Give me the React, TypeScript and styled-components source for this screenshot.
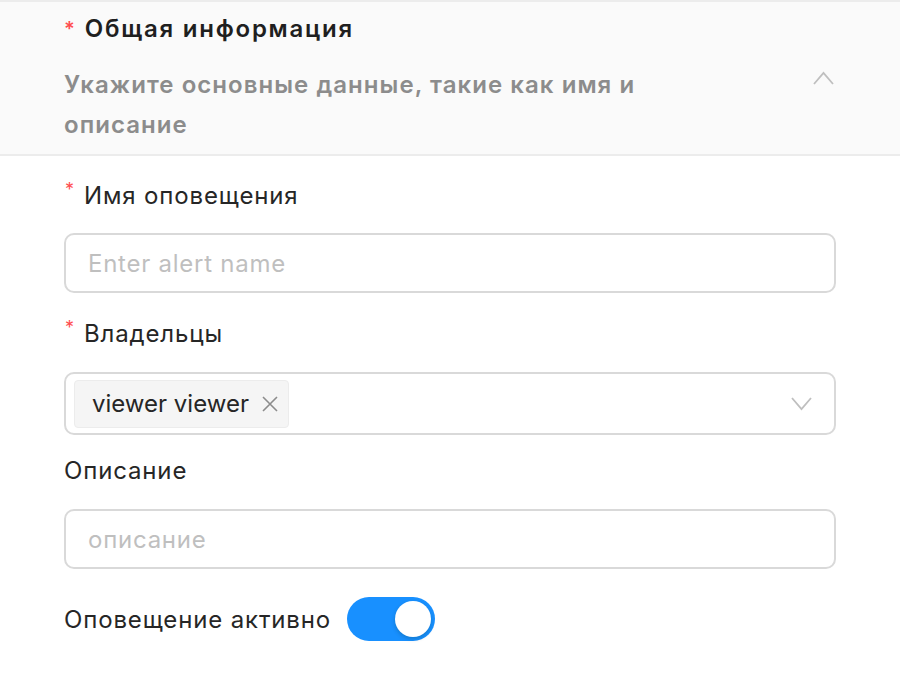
import React, { useState } from "react";
import styled, { createGlobalStyle } from "styled-components";

const GlobalStyle = createGlobalStyle`
  html, body { margin: 0; padding: 0; background: #ffffff; }
  body { font-family: Inter, "Noto Sans", "Liberation Sans", sans-serif; -webkit-font-smoothing: antialiased; }
  * { box-sizing: border-box; }
`;

const Page = styled.div`
  width: 900px;
  height: 680px;
  background: #ffffff;
  overflow: hidden;
`;

const Header = styled.div`
  display: flex;
  align-items: flex-start;
  background: #fafafa;
  border-top: 2px solid #ececec;
  border-bottom: 2px solid #ececec;
  padding: 10px 64px 8px 64px;
  height: 156px;
`;

const HeaderText = styled.div`
  flex: 1;
  display: flex;
  flex-direction: column;
`;

const Title = styled.div`
  display: flex;
  align-items: center;
  font-size: 24px;
  font-weight: 600;
  letter-spacing: 1.75px;
  line-height: 34px;
  color: #1f1f1f;
`;

const TitleStar = styled.span`
  color: #ff4d4f;
  margin-right: 10px;
  font-size: 20px;
  font-weight: 600;
  letter-spacing: 0;
`;

const Subtitle = styled.div`
  margin-top: 19px;
  max-width: 640px;
  font-size: 24px;
  font-weight: 600;
  letter-spacing: 1.05px;
  line-height: 40px;
  color: #8c8c8c;
`;

const Collapse = styled.div`
  margin-top: 59px;
  margin-right: 2px;
  width: 21px;
  height: 14px;
  color: #bfbfbf;
  display: flex;
`;

const Body = styled.div`
  padding: 0 64px;
  display: flex;
  flex-direction: column;
`;

const Label = styled.div<{ $top: number; $bottom: number }>`
  margin-top: ${(p) => p.$top}px;
  margin-bottom: ${(p) => p.$bottom}px;
  display: flex;
  align-items: center;
  font-size: 24px;
  letter-spacing: 0.85px;
  line-height: 30px;
  color: #262626;
`;

const Star = styled.span`
  color: #ff4d4f;
  font-size: 18px;
  align-self: flex-start;
  line-height: 18px;
  margin-top: 0px;
  margin-left: 1px;
  margin-right: 10px;
  letter-spacing: 0;
`;

const Input = styled.input`
  height: 60px;
  width: 100%;
  border: 2px solid #d9d9d9;
  border-radius: 10px;
  padding: 0 22px;
  font-family: inherit;
  font-size: 24px;
  letter-spacing: 0.75px;
  color: #262626;
  background: #fff;
  outline: none;
  &::placeholder { color: #bfbfbf; }
`;

const SelectBox = styled.div`
  height: 63px;
  width: 100%;
  border: 2px solid #d9d9d9;
  border-radius: 10px;
  padding: 0 22px 0 8px;
  display: flex;
  align-items: center;
  justify-content: space-between;
`;

const Tag = styled.div`
  height: 48px;
  display: flex;
  align-items: center;
  gap: 13px;
  padding: 0 10px 0 17px;
  background: #f5f5f5;
  border: 1px solid #ececec;
  border-radius: 4px;
  font-size: 24px;
  letter-spacing: 0;
  color: #262626;
`;

const TagClose = styled.span`
  display: flex;
  color: #8c8c8c;
`;

const Arrow = styled.span`
  display: flex;
  color: #bfbfbf;
`;

const SwitchRow = styled.div`
  margin-top: 28px;
  display: flex;
  align-items: center;
  gap: 16px;
  font-size: 24px;
  letter-spacing: 0.85px;
  color: #262626;
`;

const SwitchTrack = styled.button<{ $on: boolean }>`
  width: 88px;
  height: 44px;
  border: none;
  border-radius: 22px;
  padding: 4px;
  background: ${(p) => (p.$on ? "#1890ff" : "#bfbfbf")};
  display: flex;
  justify-content: ${(p) => (p.$on ? "flex-end" : "flex-start")};
  cursor: pointer;
`;

const Thumb = styled.span`
  width: 36px;
  height: 36px;
  border-radius: 50%;
  background: #fff;
  box-shadow: 0 2px 4px rgba(0, 35, 11, 0.2);
`;

export default function App() {
  const [on, setOn] = useState(true);
  return (
    <Page>
      <GlobalStyle />
      <Header>
        <HeaderText>
          <Title>
            <TitleStar>*</TitleStar>Общая информация
          </Title>
          <Subtitle>Укажите основные данные, такие как имя и описание</Subtitle>
        </HeaderText>
        <Collapse>
          <svg width="21" height="14" viewBox="0 0 21 14" fill="none">
            <path d="M1 13 L10.5 2 L20 13" stroke="currentColor" strokeWidth="1.8" />
          </svg>
        </Collapse>
      </Header>
      <Body>
        <Label $top={25} $bottom={22}>
          <Star>*</Star>Имя оповещения
        </Label>
        <Input placeholder="Enter alert name" />
        <Label $top={26} $bottom={23}>
          <Star>*</Star>Владельцы
        </Label>
        <SelectBox>
          <Tag>
            viewer viewer
            <TagClose>
              <svg width="16" height="16" viewBox="0 0 16 16" fill="none">
                <path d="M1 1 L15 15 M15 1 L1 15" stroke="currentColor" strokeWidth="1.6" />
              </svg>
            </TagClose>
          </Tag>
          <Arrow>
            <svg width="21" height="14" viewBox="0 0 21 14" fill="none">
              <path d="M1 1 L10.5 12 L20 1" stroke="currentColor" strokeWidth="1.8" />
            </svg>
          </Arrow>
        </SelectBox>
        <Label $top={21} $bottom={23}>Описание</Label>
        <Input placeholder="описание" />
        <SwitchRow>
          Оповещение активно
          <SwitchTrack $on={on} onClick={() => setOn(!on)}>
            <Thumb />
          </SwitchTrack>
        </SwitchRow>
      </Body>
    </Page>
  );
}
